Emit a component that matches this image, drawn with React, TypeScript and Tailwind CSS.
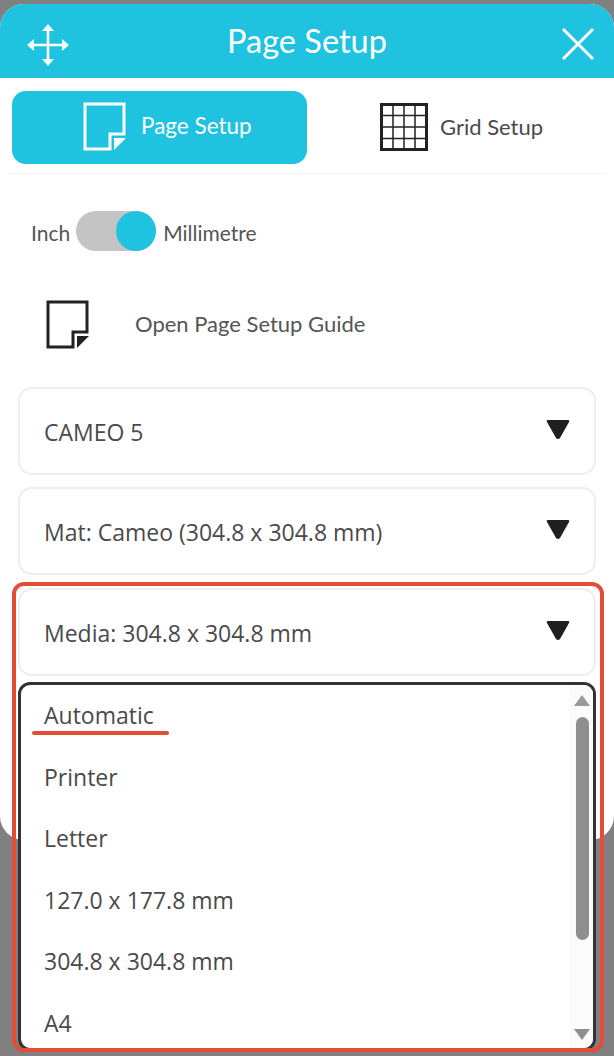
import React from "react";

function PageIcon({ color, corner }: { color: string; corner: string }) {
  return (
    <svg width="44" height="50" viewBox="0 0 44 50" fill="none">
      <path d="M2 2H41V32H27V47H2Z" stroke={color} strokeWidth="3" />
      <path d="M31 48V36H43Z" fill={corner} />
    </svg>
  );
}

function GridIcon() {
  return (
    <svg width="48" height="48" viewBox="0 0 48 48" fill="none" stroke="#222" strokeWidth="1.5">
      <rect x="1.5" y="1.5" width="45" height="45" strokeWidth="3" />
      <path d="M13 2V46M24 2V46M35 2V46M2 12.5H46M2 24H46M2 35.5H46" />
    </svg>
  );
}

function MoveIcon() {
  return (
    <svg width="42" height="42" viewBox="0 0 42 42" fill="#fff" stroke="none">
      <path d="M19.7 4H22.3V38H19.7Z" />
      <path d="M4 19.7H38V22.3H4Z" />
      <path d="M21 0L27 7H15Z" />
      <path d="M21 42L27 35H15Z" />
      <path d="M0 21L7 15V27Z" />
      <path d="M42 21L35 15V27Z" />
    </svg>
  );
}

function SelectBox({ label }: { label: string }) {
  return (
    <div className="mx-[18px] flex h-[88px] items-center justify-between rounded-[14px] border-2 border-[#eceef0] bg-white pl-[24px] pr-[24px]">
      <span className="pt-[2px] text-[23px] text-[#4a4a4a] [font-family:'Open_Sans',sans-serif]">{label}</span>
      <svg className="mb-[4px]" width="24" height="21" viewBox="0 0 24 21" fill="#1d2022">
        <path d="M2 1H22Q24 1 23 3L14 19Q12 21 10 19L1 3Q0 1 2 1Z" />
      </svg>
    </div>
  );
}

const mediaOptions = ["Automatic", "Printer", "Letter", "127.0 x 177.8 mm", "304.8 x 304.8 mm", "A4"];

export default function App() {
  return (
    <div className="relative h-[1056px] w-[614px] overflow-hidden bg-[#808080] pt-[4px] [font-family:Lato,sans-serif]">
      <div className="h-[836px] rounded-[24px] bg-white">
        <div className="relative flex h-[74px] items-center justify-center rounded-t-[24px] bg-[#1fc3e0]">
          <div className="absolute left-[27px] top-[20px]">
            <MoveIcon />
          </div>
          <span className="text-[32.5px] text-white">Page Setup</span>
          <svg className="absolute right-[18px] top-[22px]" width="36" height="36" viewBox="0 0 36 36" stroke="#fff" strokeWidth="3">
            <path d="M3 3L33 33M33 3L3 33" />
          </svg>
        </div>

        <div className="mx-[8px] flex h-[96px] items-center border-b border-[#f4f4f4] pl-[4px] pt-[3px]">
          <div className="flex h-[73px] w-[295px] items-center gap-[14px] rounded-[14px] bg-[#1fc3e0] pl-[71px]">
            <PageIcon color="#fff" corner="#fff" />
            <span className="pb-[2px] text-[22.5px] text-white">Page Setup</span>
          </div>
          <div className="ml-[73px] flex items-center gap-[12px]">
            <GridIcon />
            <span className="pb-[2px] text-[22px] text-[#4a4a4a]">Grid Setup</span>
          </div>
        </div>

        <div className="mt-[37px] flex items-center pl-[31px]">
          <span className="pt-[3px] text-[21px] text-[#555]">Inch</span>
          <div className="ml-[6px] flex h-[40px] w-[80px] justify-end rounded-full bg-[#c4c4c4]">
            <div className="h-[40px] w-[40px] rounded-full bg-[#1fc3e0]" />
          </div>
          <span className="ml-[7px] pt-[3px] text-[21px] text-[#555]">Millimetre</span>
        </div>

        <div className="mt-[34px] flex h-[80px] items-center pl-[46px]">
          <PageIcon color="#222" corner="#222" />
          <span className="ml-[45px] pb-[3px] text-[22px] text-[#555]">Open Page Setup Guide</span>
        </div>

        <div className="mt-[22px] flex flex-col gap-[12px]">
          <SelectBox label="CAMEO 5" />
          <SelectBox label="Mat: Cameo (304.8 x 304.8 mm)" />
          <div className="pt-[1px]">
            <SelectBox label="Media: 304.8 x 304.8 mm" />
          </div>
        </div>
      </div>

      <div className="absolute left-[18px] top-[682px] h-[369px] w-[578px] overflow-hidden rounded-[12px] border-[3px] border-[#333] bg-white [font-family:'Open_Sans',sans-serif]">
        <div className="flex flex-col pl-[23px]">
          {mediaOptions.map((option) => (
            <div key={option} className="flex h-[61.5px] items-center pb-[1px] text-[23px] text-[#4a4a4a]">
              {option}
            </div>
          ))}
        </div>
        <div className="absolute bottom-0 right-0 top-0 flex w-[24px] flex-col items-center bg-[#fbfbfb] pl-[2px] pt-[10px]">
          <div className="h-0 w-0 border-x-[8px] border-b-[11px] border-x-transparent border-b-[#9a9a9a]" />
          <div className="mt-[11px] h-[223px] w-[13px] rounded-full bg-[#8f8f8f]" />
          <div className="mb-[8px] mt-auto h-0 w-0 border-x-[8px] border-t-[11px] border-x-transparent border-t-[#8f8f8f]" />
        </div>
      </div>

      <div className="absolute left-[32px] top-[731px] h-[4px] w-[137px] rounded-full bg-[#e44c38]" />
      <div className="absolute left-[12px] top-[582px] h-[470px] w-[592px] rounded-[12px] border-[4px] border-[#e44c38]" />
    </div>
  );
}
